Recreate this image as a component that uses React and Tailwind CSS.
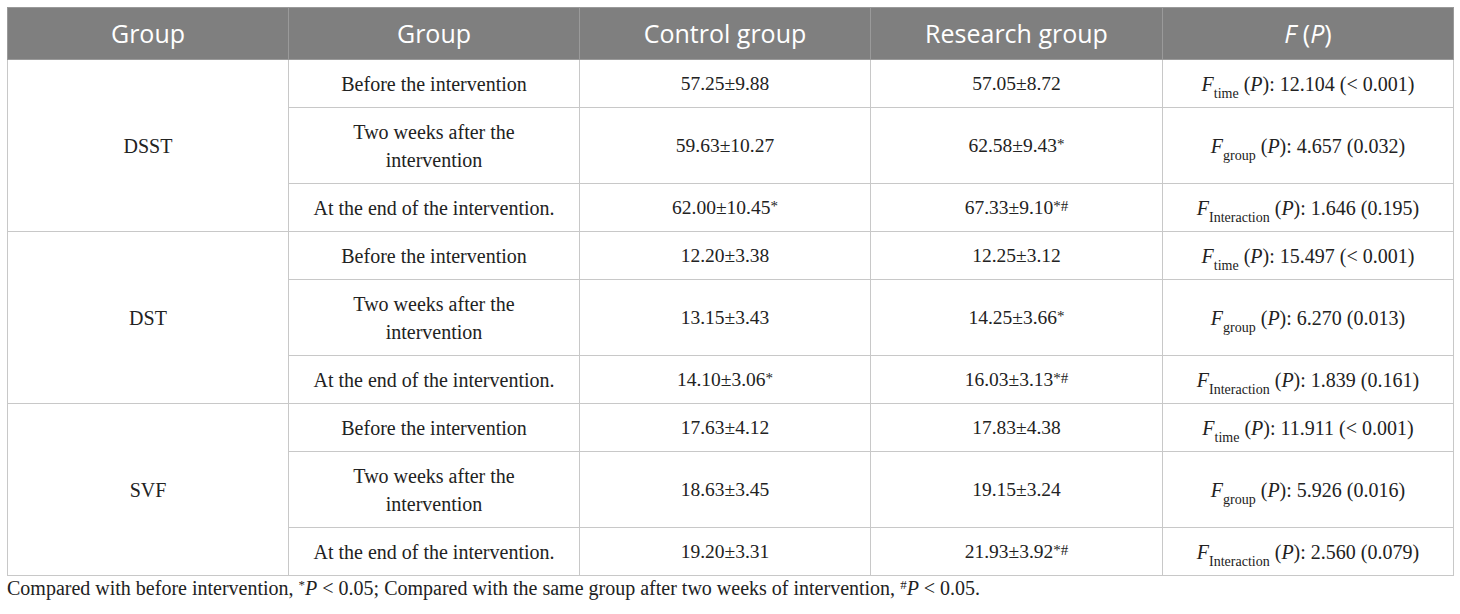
import React from "react";

const serif = { fontFamily: '"Liberation Serif", "Times New Roman", serif' };

function F({ sub, rest }) {
  return (
    <span>
      <i>F</i>
      <sub className="text-[14px] align-[-4px] leading-none">{sub}</sub> (<i>P</i>): {rest}
    </span>
  );
}

const groups = [
  {
    name: "DSST",
    rows: [
      ["57.25±9.88", "57.05±8.72", "time", "12.104 (< 0.001)"],
      ["59.63±10.27", "62.58±9.43*", "group", "4.657 (0.032)"],
      ["62.00±10.45*", "67.33±9.10*#", "Interaction", "1.646 (0.195)"],
    ],
  },
  {
    name: "DST",
    rows: [
      ["12.20±3.38", "12.25±3.12", "time", "15.497 (< 0.001)"],
      ["13.15±3.43", "14.25±3.66*", "group", "6.270 (0.013)"],
      ["14.10±3.06*", "16.03±3.13*#", "Interaction", "1.839 (0.161)"],
    ],
  },
  {
    name: "SVF",
    rows: [
      ["17.63±4.12", "17.83±4.38", "time", "11.911 (< 0.001)"],
      ["18.63±3.45", "19.15±3.24", "group", "5.926 (0.016)"],
      ["19.20±3.31", "21.93±3.92*#", "Interaction", "2.560 (0.079)"],
    ],
  },
];

const labels = [
  "Before the intervention",
  <>Two weeks after the<br />intervention</>,
  "At the end of the intervention.",
];

function Val({ v }) {
  const m = v.match(/^([^*#]+)(.*)$/);
  return (
    <span>
      {m[1]}
      {m[2] && <span className="text-[15px] relative top-[-3px] leading-none">{m[2]}</span>}
    </span>
  );
}

export default function App() {
  const td = "border border-[#c8c8c8] text-center px-2 py-[9.5px] leading-[28px] text-[20px] text-[#222]";
  const tdn = "border border-[#c8c8c8] text-center px-2 py-[9.5px] leading-[28px] text-[19.5px] text-[#222]";
  const th = "border border-[#9a9a9a] text-center font-normal text-white text-[25px] h-[52px]";
  return (
    <div className="bg-white w-[1460px] h-[614px] pt-[7px] pl-[7px]">
      <table className="table-fixed border-collapse w-[1446px]" style={serif}>
        <colgroup>
          <col className="w-[281px]" />
          <col className="w-[291px]" />
          <col className="w-[291px]" />
          <col className="w-[292px]" />
          <col className="w-[291px]" />
        </colgroup>
        <thead>
          <tr className="bg-[#7f7f7f]" style={{ fontFamily: '"Open Sans", sans-serif' }}>
            <th className={th}>Group</th>
            <th className={th}>Group</th>
            <th className={th}>Control group</th>
            <th className={th}>Research group</th>
            <th className={th}>
              <i>F</i> (<i>P</i>)
            </th>
          </tr>
        </thead>
        <tbody>
          {groups.map((g) =>
            g.rows.map((r, i) => (
              <tr key={g.name + i}>
                {i === 0 && (
                  <td rowSpan={3} className={td}>
                    {g.name}
                  </td>
                )}
                <td className={td}>{labels[i]}</td>
                <td className={tdn}>
                  <Val v={r[0]} />
                </td>
                <td className={tdn}>
                  <Val v={r[1]} />
                </td>
                <td className={td}>
                  <F sub={r[2]} rest={r[3]} />
                </td>
              </tr>
            ))
          )}
        </tbody>
      </table>
      <p className="text-[20px] text-[#222] leading-[22px] mt-[1px]" style={serif}>
        Compared with before intervention, <span className="text-[13px] relative top-[-6px]">*</span>
        <i>P</i> &lt; 0.05; Compared with the same group after two weeks of intervention,{" "}
        <span className="text-[13px] relative top-[-6px]">#</span>
        <i>P</i> &lt; 0.05.
      </p>
    </div>
  );
}
